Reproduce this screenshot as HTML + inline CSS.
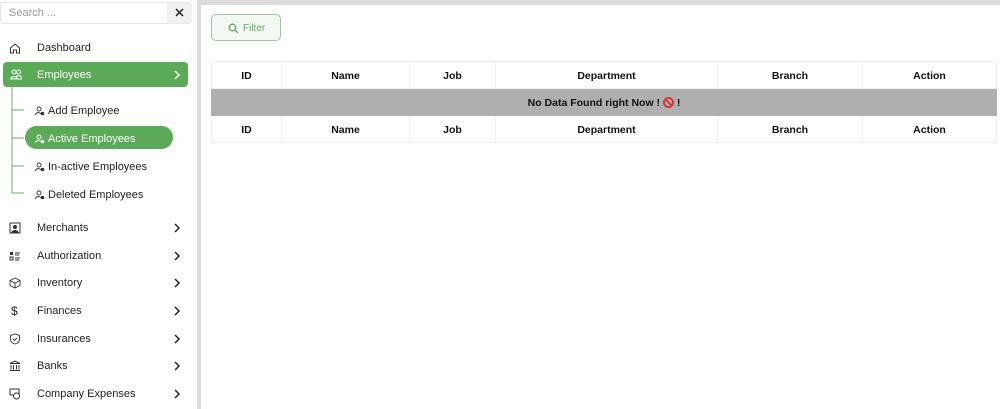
<!DOCTYPE html>
<html><head><meta charset="utf-8"><style>
*{box-sizing:border-box;margin:0;padding:0}
body{width:1000px;height:409px;overflow:hidden;background:#fff;font-family:"Liberation Sans",sans-serif;font-size:11px;color:#222;position:relative}
.side{position:absolute;left:0;top:0;width:197px;height:409px;background:#fff}
.divider{position:absolute;left:197px;top:0;width:4px;height:409px;background:#dcdcdc}
.topbar{position:absolute;left:197px;top:0;width:803px;height:5px;background:#dcdcdc}
.search{position:absolute;left:0;top:2px;width:192px;height:22px;border:1px solid #e6e6e6;border-radius:4px;background:#fff}
.search span{position:absolute;left:8px;top:4px;color:#999;font-size:11px}
.search .x{position:absolute;left:166px;top:0;width:25px;height:20px;background:#f0f0f0;border-radius:0 4px 4px 0}
.item{position:absolute;left:0;width:195px;height:26px;line-height:28px}
.item .t{position:absolute;left:37px;font-size:11px}
.item .ic{position:absolute;left:9px;top:8px;width:12px;height:12px}
.chev{position:absolute;left:173px;top:9px;width:9px;height:10px}
.emp{position:absolute;left:3px;top:62px;width:185px;height:25px;background:#5aaa58;border-radius:4px;color:#fff}
.sub{position:absolute;left:35px;height:22px;line-height:24px;font-size:11px}
.sub .t{position:absolute;left:13px;white-space:nowrap}
.pill{position:absolute;left:25px;top:126px;width:148px;height:23px;background:#5aaa58;border-radius:12px}
.main{position:absolute;left:201px;top:5px;width:799px;height:404px;background:#fff}
.filter{position:absolute;left:211px;top:14px;width:70px;height:27px;border:1px solid #9cc99b;border-radius:5px;background:#f4f8f3;color:#6aa868;font-size:10px;line-height:27px}
table{position:absolute;left:211px;top:61px;width:786px;border-collapse:collapse;font-size:10.5px;font-weight:bold}
td{height:27px;text-align:center;border:1px solid #eee;color:#111;padding-top:1px}
tr.g td{background:#afafaf;border-color:#afafaf}
</style></head><body>
<div class="side">
 <div class="search"><span>Search ...</span><div class="x"><svg width="25" height="20" viewBox="0 0 25 20"><path d="M9 6l7 7M16 6l-7 7" stroke="#222" stroke-width="1.5"/></svg></div></div>
 <div class="item" style="top:34px"><svg class="ic" viewBox="0 0 12 12"><path d="M1.5 6L6 2l4.5 4v5h-3V8h-3v3h-3z" fill="none" stroke="#333" stroke-width="1"/></svg><span class="t">Dashboard</span></div>
 <div class="emp"><svg style="position:absolute;left:7px;top:7px" width="12" height="11" viewBox="0 0 12 11"><circle cx="4" cy="3" r="2" fill="none" stroke="#fff"/><circle cx="8.5" cy="3" r="2" fill="none" stroke="#fff"/><path d="M0.5 10c0-3 7-3 7 0zM6 8c1-2 6-2 5.5 2H7" fill="none" stroke="#fff"/></svg><span style="position:absolute;left:34px;top:7px;font-size:11px">Employees</span><svg style="position:absolute;left:170px;top:8px" width="8" height="10" viewBox="0 0 8 10"><path d="M2 1l4 4-4 4" fill="none" stroke="#fff" stroke-width="1.5"/></svg></div>
 <svg style="position:absolute;left:0;top:87px" width="40" height="110"><path d="M12 0V106h12M12 23h12M12 51h12M12 79h12" fill="none" stroke="#6ab068" stroke-width="1"/></svg>
 <div class="pill"></div>
 <div class="sub" style="top:99px"><svg style="position:absolute;left:0;top:7px" width="10" height="10" viewBox="0 0 10 10"><circle cx="4" cy="3" r="2" fill="none" stroke="#333" stroke-width=".9"/><path d="M0.5 9c0-3 5-3 5-1" fill="none" stroke="#333" stroke-width=".9"/><circle cx="7.5" cy="7.5" r="1.8" fill="#333"/></svg><span class="t">Add Employee</span></div>
 <div class="sub" style="top:127px;color:#fff"><svg style="position:absolute;left:0;top:7px" width="10" height="10" viewBox="0 0 10 10"><circle cx="4" cy="3" r="2" fill="none" stroke="#fff" stroke-width=".9"/><path d="M0.5 9c0-3 5-3 5-1" fill="none" stroke="#fff" stroke-width=".9"/><circle cx="7.5" cy="7.5" r="1.8" fill="#fff"/></svg><span class="t">Active Employees</span></div>
 <div class="sub" style="top:155px"><svg style="position:absolute;left:0;top:7px" width="10" height="10" viewBox="0 0 10 10"><circle cx="4" cy="3" r="2" fill="none" stroke="#333" stroke-width=".9"/><path d="M0.5 9c0-3 5-3 5-1" fill="none" stroke="#333" stroke-width=".9"/><circle cx="7.5" cy="7.5" r="1.8" fill="#333"/></svg><span class="t">In-active Employees</span></div>
 <div class="sub" style="top:183px"><svg style="position:absolute;left:0;top:7px" width="10" height="10" viewBox="0 0 10 10"><circle cx="4" cy="3" r="2" fill="none" stroke="#333" stroke-width=".9"/><path d="M0.5 9c0-3 5-3 5-1" fill="none" stroke="#333" stroke-width=".9"/><circle cx="7.5" cy="7.5" r="1.8" fill="#333"/></svg><span class="t">Deleted Employees</span></div>

 <div class="item" style="top:214px"><svg class="ic" viewBox="0 0 12 12"><rect x="1" y="1" width="10" height="10" fill="none" stroke="#333"/><circle cx="6" cy="5" r="2" fill="#333"/><path d="M2 11c1-4 7-4 8 0z" fill="#333"/></svg><span class="t">Merchants</span><svg class="chev" viewBox="0 0 9 10"><path d="M2 1l4 4-4 4" fill="none" stroke="#222" stroke-width="1.5"/></svg></div>
 <div class="item" style="top:242px"><svg class="ic" viewBox="0 0 12 12"><rect x="1" y="2" width="3" height="3" fill="#333"/><rect x="1" y="7" width="3" height="3" fill="none" stroke="#333"/><path d="M6 3h5M6 5h4M6 8h5M6 10h4" stroke="#333"/></svg><span class="t">Authorization</span><svg class="chev" viewBox="0 0 9 10"><path d="M2 1l4 4-4 4" fill="none" stroke="#222" stroke-width="1.5"/></svg></div>
 <div class="item" style="top:269px"><svg class="ic" viewBox="0 0 12 12"><path d="M1 3.5L6 1l5 2.5v5L6 11 1 8.5zM1 3.5L6 6l5-2.5M6 6v5" fill="none" stroke="#333" stroke-width=".9"/></svg><span class="t">Inventory</span><svg class="chev" viewBox="0 0 9 10"><path d="M2 1l4 4-4 4" fill="none" stroke="#222" stroke-width="1.5"/></svg></div>
 <div class="item" style="top:297px"><span style="position:absolute;left:11px;font-size:12px">$</span><span class="t">Finances</span><svg class="chev" viewBox="0 0 9 10"><path d="M2 1l4 4-4 4" fill="none" stroke="#222" stroke-width="1.5"/></svg></div>
 <div class="item" style="top:325px"><svg class="ic" viewBox="0 0 12 12"><path d="M6 1l4.5 1.5v3.5c0 3-2.5 4.5-4.5 5-2-.5-4.5-2-4.5-5V2.5z M4 6l1.5 1.5L8 5" fill="none" stroke="#333" stroke-width=".9"/></svg><span class="t">Insurances</span><svg class="chev" viewBox="0 0 9 10"><path d="M2 1l4 4-4 4" fill="none" stroke="#222" stroke-width="1.5"/></svg></div>
 <div class="item" style="top:352px"><svg class="ic" viewBox="0 0 12 12"><path d="M1 3.5L6 1l5 2.5zM2 5v4.5M4.5 5v4.5M7.5 5v4.5M10 5v4.5M1 10.5h10" fill="none" stroke="#333" stroke-width="1"/></svg><span class="t">Banks</span><svg class="chev" viewBox="0 0 9 10"><path d="M2 1l4 4-4 4" fill="none" stroke="#222" stroke-width="1.5"/></svg></div>
 <div class="item" style="top:380px"><svg class="ic" viewBox="0 0 12 12"><rect x="1" y="1" width="9" height="6" fill="none" stroke="#333"/><circle cx="7.5" cy="8" r="3" fill="#fff" stroke="#333"/></svg><span class="t">Company Expenses</span><svg class="chev" viewBox="0 0 9 10"><path d="M2 1l4 4-4 4" fill="none" stroke="#222" stroke-width="1.5"/></svg></div>
</div>
<div class="divider"></div><div class="topbar"></div>
<div class="main"></div>
<div class="filter"><svg style="position:absolute;left:16px;top:8px" width="11" height="11" viewBox="0 0 11 11"><circle cx="4.5" cy="4.5" r="3.3" fill="none" stroke="#6aa868" stroke-width="1.3"/><path d="M7 7l3 3" stroke="#6aa868" stroke-width="1.3"/></svg><span style="position:absolute;left:31px">Filter</span></div>
<table>
<tr><td style="width:70px">ID</td><td style="width:128px">Name</td><td style="width:86px">Job</td><td style="width:222px">Department</td><td style="width:145px">Branch</td><td>Action</td></tr>
<tr class="g"><td colspan="6">No Data Found right Now ! <span style="display:inline-block;width:11px;height:11px;border:2px solid #d33;border-radius:50%;vertical-align:-2px;background:linear-gradient(45deg,transparent 42%,#d33 42%,#d33 58%,transparent 58%)"></span> !</td></tr>
<tr><td>ID</td><td>Name</td><td>Job</td><td>Department</td><td>Branch</td><td>Action</td></tr>
</table>
</body></html>
